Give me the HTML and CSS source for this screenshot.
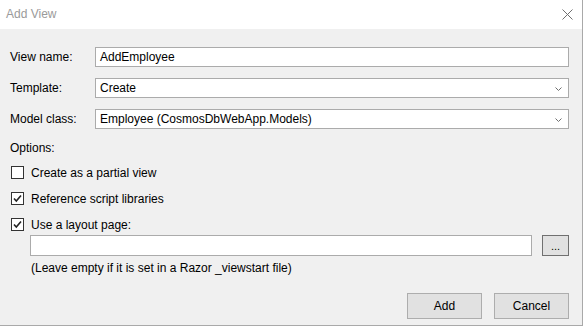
FILE: index.html
```html
<!DOCTYPE html>
<html lang="en">
<head>
    <meta charset="UTF-8">
    <meta name="viewport" content="width=device-width, initial-scale=1.0">
    <title>Add View</title>
    <link rel="stylesheet" href="styles.css">
</head>
<body>
    <div class="window">
        <div class="titlebar">
            <span class="title">Add View</span>
            <span class="close">
                <svg width="11" height="11" viewBox="0 0 11 11">
                    <path d="M0.5 0.5 L10.5 10.5 M10.5 0.5 L0.5 10.5" stroke="#6f6f6f" stroke-width="1" fill="none"/>
                </svg>
            </span>
        </div>
        <div class="content">
            <div class="field">
                <label class="field-label">View name:</label>
                <div class="textbox">AddEmployee</div>
            </div>
            <div class="field">
                <label class="field-label">Template:</label>
                <div class="combo">
                    <span>Create</span>
                    <svg class="chevron" width="7" height="4" viewBox="0 0 7 4">
                        <path d="M0.5 0.5 L3.5 3.5 L6.5 0.5" stroke="#707070" stroke-width="1" fill="none"/>
                    </svg>
                </div>
            </div>
            <div class="field">
                <label class="field-label">Model class:</label>
                <div class="combo">
                    <span>Employee (CosmosDbWebApp.Models)</span>
                    <svg class="chevron" width="7" height="4" viewBox="0 0 7 4">
                        <path d="M0.5 0.5 L3.5 3.5 L6.5 0.5" stroke="#707070" stroke-width="1" fill="none"/>
                    </svg>
                </div>
            </div>

            <div class="options-label">Options:</div>

            <div class="check first">
                <span class="box"></span>
                <span>Create as a partial view</span>
            </div>
            <div class="check">
                <span class="box">
                    <svg width="11" height="11" viewBox="0 0 11 11">
                        <path d="M2 5.5 L4.3 8 L9 2.5" stroke="#222" stroke-width="1.6" fill="none"/>
                    </svg>
                </span>
                <span>Reference script libraries</span>
            </div>
            <div class="check">
                <span class="box">
                    <svg width="11" height="11" viewBox="0 0 11 11">
                        <path d="M2 5.5 L4.3 8 L9 2.5" stroke="#222" stroke-width="1.6" fill="none"/>
                    </svg>
                </span>
                <span>Use a layout page:</span>
            </div>

            <div class="layout-row">
                <div class="textbox layout-box"></div>
                <div class="browse">...</div>
            </div>
            <div class="hint">(Leave empty if it is set in a Razor _viewstart file)</div>

            <div class="buttons">
                <div class="btn">Add</div>
                <div class="btn">Cancel</div>
            </div>
        </div>
    </div>
</body>
</html>
```

FILE: styles.css
```css
body {
    margin: 0;
    background: #ffffff;
    font-family: "Liberation Sans", Arial, sans-serif;
    font-size: 12px;
    color: #000;
}
.window {
    width: 582px;
    height: 325px;
    border-right: 1px solid #a9a9a9;
    border-bottom: 1px solid #a9a9a9;
    background: #f0f0f0;
    display: flex;
    flex-direction: column;
}
.titlebar {
    height: 29px;
    background: #fff;
    display: flex;
    align-items: center;
    justify-content: space-between;
    padding: 0 9px 0 6px;
}
.title {
    color: #9a9a9a;
    font-size: 12px;
    margin-top: -2px;
}
.close {
    display: flex;
    margin-top: -1px;
}
.content {
    flex: 1;
    padding: 18px 13px 0 10px;
}
.field {
    display: flex;
    align-items: center;
    height: 20px;
    margin-bottom: 11px;
}
.field-label {
    width: 85px;
}
.textbox, .combo {
    flex: 1;
    height: 20px;
    box-sizing: border-box;
    border: 1px solid #ababab;
    background: #fff;
    padding: 0 4px;
    display: flex;
    align-items: center;
}
.combo {
    justify-content: space-between;
    padding-right: 6px;
}
.chevron {
    margin-top: 1px;
}
.options-label {
    margin-top: 12px;
    line-height: 15px;
}
.check {
    display: flex;
    align-items: center;
    height: 13px;
    margin-top: 13px;
    margin-left: 1px;
}
.check.first {
    margin-top: 10px;
}
.box {
    width: 13px;
    height: 13px;
    box-sizing: border-box;
    border: 1px solid #333;
    background: #fff;
    margin-right: 7px;
    display: flex;
    align-items: center;
    justify-content: center;
}
.layout-row {
    display: flex;
    align-items: center;
    height: 21px;
    margin-top: 4px;
    padding-left: 20px;
}
.layout-box {
    height: 21px;
    margin-right: 10px;
}
.browse {
    width: 27px;
    height: 21px;
    box-sizing: border-box;
    border: 1px solid #707070;
    background: #e1e1e1;
    display: flex;
    align-items: center;
    justify-content: center;
    font-size: 11px;
}
.hint {
    margin-top: 5px;
    margin-left: 21px;
    line-height: 15px;
}
.buttons {
    display: flex;
    justify-content: flex-end;
    gap: 12px;
    margin-top: 17px;
}
.btn {
    width: 75px;
    height: 26px;
    box-sizing: border-box;
    border: 1px solid #adadad;
    background: #e1e1e1;
    display: flex;
    align-items: center;
    justify-content: center;
}
```
